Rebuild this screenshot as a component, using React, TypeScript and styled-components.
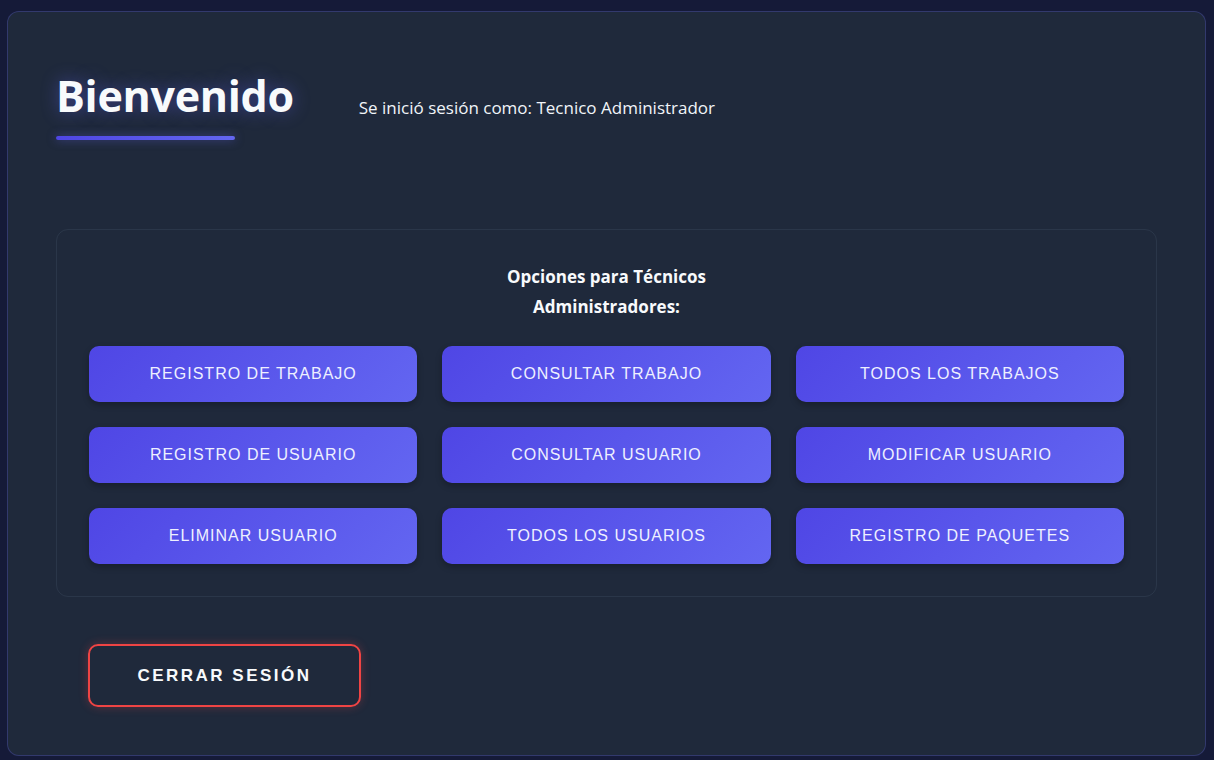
import React from "react";
import styled, { createGlobalStyle } from "styled-components";

const Global = createGlobalStyle`
  html, body { margin: 0; padding: 0; }
  body {
    background: #151a38;
    font-family: "Open Sans", "Noto Sans", sans-serif;
    min-height: 760px;
  }
  * { box-sizing: border-box; }
`;

const Page = styled.div`
  padding: 11px 8px 4px 7px;
  min-height: 760px;
  display: flex;
  flex-direction: column;
`;

const Card = styled.div`
  flex: 1;
  background: #1f293b;
  border: 1px solid rgba(99, 102, 241, 0.28);
  border-radius: 12px;
  padding: 56px 48px 48px 48px;
  display: flex;
  flex-direction: column;
`;

const Header = styled.div`
  display: flex;
  align-items: flex-start;
  gap: 65px;
  margin-bottom: 89px;
`;

const TitleBlock = styled.div`
  display: flex;
  flex-direction: column;
`;

const Title = styled.h1`
  margin: 0;
  font-size: 43px;
  font-weight: 700;
  line-height: 56px;
  color: #f8fafc;
  text-shadow: 0 0 18px rgba(99, 102, 241, 0.45);
  letter-spacing: -0.3px;
`;

const Underline = styled.div`
  width: 179px;
  height: 4px;
  border-radius: 2px;
  margin-top: 12px;
  background: linear-gradient(90deg, #4f46e5, #6366f1);
  box-shadow: 0 0 10px rgba(99, 102, 241, 0.5);
`;

const Subtitle = styled.p`
  margin: 28px 0 0;
  font-size: 17px;
  color: #f1f5f9;
`;

const Panel = styled.section`
  border: 1px solid rgba(71, 85, 105, 0.3);
  border-radius: 12px;
  padding: 32px 32px 32px;
  display: flex;
  flex-direction: column;
  align-items: center;
`;

const PanelTitle = styled.h2`
  margin: 0 0 24px;
  max-width: 240px;
  text-align: center;
  font-size: 17px;
  font-weight: 700;
  line-height: 30px;
  color: #f8fafc;
`;

const Grid = styled.div`
  align-self: stretch;
  display: grid;
  grid-template-columns: repeat(3, 1fr);
  column-gap: 25px;
  row-gap: 25px;
`;

const OptionButton = styled.button`
  height: 56px;
  border: none;
  border-radius: 10px;
  background: linear-gradient(135deg, #4f46e5 0%, #6366f1 100%);
  color: #eef0ff;
  font-family: "Liberation Sans", Arial, sans-serif;
  font-size: 16px;
  letter-spacing: 1px;
  text-transform: uppercase;
  box-shadow: 0 3px 6px rgba(0, 0, 0, 0.25);
  cursor: pointer;
`;

const Footer = styled.div`
  margin-top: 47px;
  padding-left: 32px;
`;

const LogoutButton = styled.button`
  width: 273px;
  height: 63px;
  background: transparent;
  border: 2px solid #ef4444;
  border-radius: 10px;
  color: #f8fafc;
  font-family: "Liberation Sans", Arial, sans-serif;
  font-size: 17px;
  font-weight: 700;
  letter-spacing: 2.5px;
  text-transform: uppercase;
  box-shadow: 0 0 10px rgba(239, 68, 68, 0.3);
  cursor: pointer;
`;

const options = [
  "Registro de Trabajo",
  "Consultar Trabajo",
  "Todos los Trabajos",
  "Registro de Usuario",
  "Consultar Usuario",
  "Modificar Usuario",
  "Eliminar Usuario",
  "Todos los Usuarios",
  "Registro de Paquetes",
];

export default function App() {
  return (
    <>
      <Global />
      <Page>
        <Card>
          <Header>
            <TitleBlock>
              <Title>Bienvenido</Title>
              <Underline />
            </TitleBlock>
            <Subtitle>Se inició sesión como: Tecnico Administrador</Subtitle>
          </Header>
          <Panel>
            <PanelTitle>Opciones para Técnicos Administradores:</PanelTitle>
            <Grid>
              {options.map((o) => (
                <OptionButton key={o}>{o}</OptionButton>
              ))}
            </Grid>
          </Panel>
          <Footer>
            <LogoutButton>Cerrar Sesión</LogoutButton>
          </Footer>
        </Card>
      </Page>
    </>
  );
}
